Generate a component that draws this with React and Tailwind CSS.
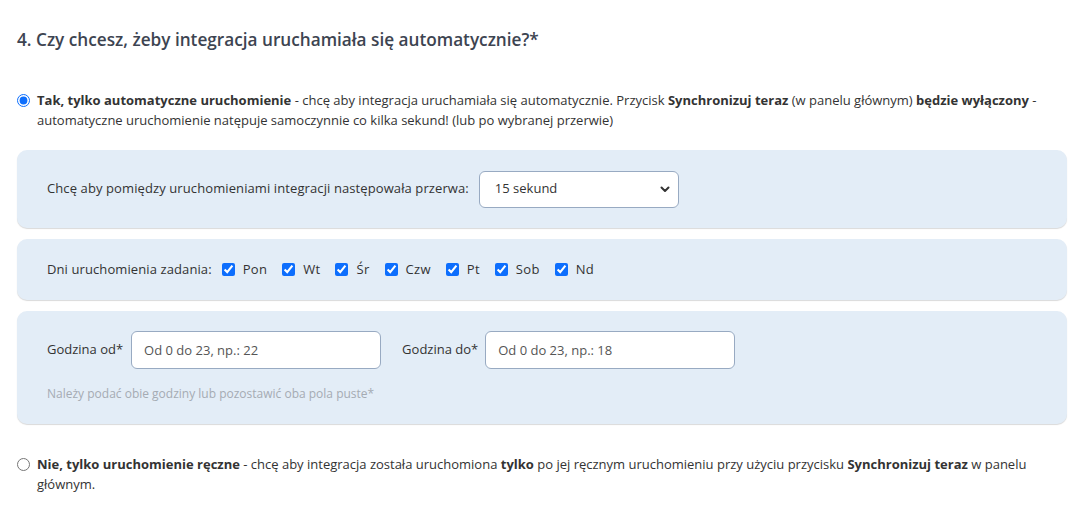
import { useState } from 'react';

const days = ['Pon', 'Wt', 'Śr', 'Czw', 'Pt', 'Sob', 'Nd'];

function Panel({ className = '', children }) {
  return (
    <div className={`bg-[#e3edf7] rounded-[10px] shadow-[0_1px_1px_rgba(0,0,0,0.15)] px-[30px] ${className}`}>
      {children}
    </div>
  );
}

export default function App() {
  const [mode, setMode] = useState('auto');
  const [checked, setChecked] = useState(days.map(() => true));

  return (
    <div className="bg-white w-[1084px] h-[509px] overflow-hidden px-[17px] pt-[28px] text-[#333] font-['Open_Sans',sans-serif]">
      <h2 className="text-[17.2px] font-semibold text-[#3d4451] leading-[24px]">
        4. Czy chcesz, żeby integracja uruchamiała się automatycznie?*
      </h2>

      <label className="flex items-start mt-[38px] text-[13px] leading-[20px] text-[#333]">
        <input
          type="radio"
          name="mode"
          checked={mode === 'auto'}
          onChange={() => setMode('auto')}
          className="w-[13px] h-[13px] mt-[4px] mr-[7px] ml-0 shrink-0 accent-[#0d6efd]"
        />
        <span>
          <b className="font-bold">Tak, tylko automatyczne uruchomienie</b> - chcę aby integracja uruchamiała się automatycznie. Przycisk{' '}
          <b className="font-bold">Synchronizuj teraz</b> (w panelu głównym) <b className="font-bold">będzie wyłączony</b> - automatyczne uruchomienie natępuje samoczynnie co kilka sekund! (lub po wybranej przerwie)
        </span>
      </label>

      <div className="mt-[20px] flex flex-col gap-[11px]">
        <Panel className="h-[78px] flex items-center">
          <span className="text-[13px] tracking-[0.1px] mr-[10px]">Chcę aby pomiędzy uruchomieniami integracji następowała przerwa:</span>
          <div className="relative">
            <select className="appearance-none w-[200px] h-[37px] bg-white border border-[#98aac2] rounded-[6px] pl-[15px] pr-[30px] text-[13px] text-[#333] outline-none">
              <option>15 sekund</option>
              <option>30 sekund</option>
              <option>1 minuta</option>
              <option>5 minut</option>
            </select>
            <svg className="absolute right-[9px] top-[15px] pointer-events-none" width="10" height="7" viewBox="0 0 10 7">
              <path d="M1.5 1.5 L5 5 L8.5 1.5" fill="none" stroke="#333" strokeWidth="2" strokeLinecap="round" strokeLinejoin="round" />
            </svg>
          </div>
        </Panel>

        <Panel className="h-[61px] flex items-center text-[13px]">
          <span className="mr-[10px] tracking-[0.1px]">Dni uruchomienia zadania:</span>
          {days.map((d, i) => (
            <label key={d} className="flex items-center mr-[15px] tracking-[0.3px]">
              <input
                type="checkbox"
                checked={checked[i]}
                onChange={() => setChecked(checked.map((c, j) => (j === i ? !c : c)))}
                className="w-[13px] h-[13px] m-0 mr-[8px] accent-[#0d6efd]"
              />
              {d}
            </label>
          ))}
        </Panel>

        <Panel className="h-[113px] pt-[20px]">
          <div className="flex items-center text-[13px]">
            <span className="mr-[8px]">Godzina od*</span>
            <input
              placeholder="Od 0 do 23, np.: 22"
              className="w-[250px] h-[38px] bg-white border border-[#98aac2] rounded-[6px] px-[12px] text-[13px] placeholder:text-[#555] outline-none"
            />
            <span className="ml-[21px] mr-[7px]">Godzina do*</span>
            <input
              placeholder="Od 0 do 23, np.: 18"
              className="w-[250px] h-[38px] bg-white border border-[#98aac2] rounded-[6px] px-[12px] text-[13px] placeholder:text-[#555] outline-none"
            />
          </div>
          <p className="mt-[16px] text-[12px] text-[#a5abb3]">Należy podać obie godziny lub pozostawić oba pola puste*</p>
        </Panel>
      </div>

      <label className="flex items-start mt-[30px] text-[13px] leading-[20px] text-[#333]">
        <input
          type="radio"
          name="mode"
          checked={mode === 'manual'}
          onChange={() => setMode('manual')}
          className="w-[13px] h-[13px] mt-[4px] mr-[7px] ml-0 shrink-0 accent-[#0d6efd]"
        />
        <span>
          <b className="font-bold">Nie, tylko uruchomienie ręczne</b> - chcę aby integracja została uruchomiona <b className="font-bold">tylko</b> po jej ręcznym uruchomieniu przy użyciu przycisku{' '}
          <b className="font-bold">Synchronizuj teraz</b> w panelu głównym.
        </span>
      </label>
    </div>
  );
}
